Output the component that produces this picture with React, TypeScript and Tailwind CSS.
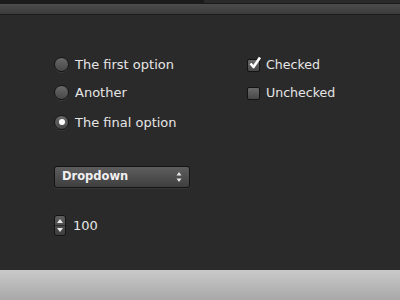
const font = "font-['Lucida_Grande','DejaVu_Sans',sans-serif]";

function Radio({ label, checked = false }: { label: string; checked?: boolean }) {
  return (
    <div className="flex h-[14px] items-center gap-[6px]">
      <span className="flex h-[15px] w-[15px] items-center justify-center rounded-full border border-[#141414] bg-[linear-gradient(#6a6a6a,#474747)] shadow-[0_1px_0_rgba(255,255,255,0.08)]">
        {checked && <span className="h-[6px] w-[6px] rounded-full bg-white" />}
      </span>
      <span className="text-[13px] leading-none text-[#e6e6e6]">{label}</span>
    </div>
  );
}

function Check({ label, checked = false }: { label: string; checked?: boolean }) {
  return (
    <div className="flex h-[13px] items-center gap-[6px]">
      <span className="relative h-[13px] w-[13px] rounded-[2px] border border-[#141414] bg-[linear-gradient(#6a6a6a,#474747)]">
        {checked && (
          <svg viewBox="0 0 14 14" className="absolute left-[0px] top-[-4px] h-[14px] w-[14px]">
            <path d="M2.5 7.5 L5.5 11 L12 1.5" fill="none" stroke="#fff" strokeWidth="2.6" strokeLinejoin="round" />
          </svg>
        )}
      </span>
      <span className="text-[12.6px] leading-none text-[#e6e6e6]">{label}</span>
    </div>
  );
}

function UpDown() {
  return (
    <svg viewBox="0 0 6 12" className="h-[12px] w-[6px]">
      <path d="M3 1 L5.5 4.5 H0.5 Z M3 11 L5.5 7.5 H0.5 Z" fill="#e8e8e8" />
    </svg>
  );
}

export default function App() {
  return (
    <div className={`flex h-[300px] w-[400px] flex-col bg-[#2b2a2b] ${font}`}>
      <div className="flex h-[4px]">
        <div className="w-[204px] bg-[#1b1b1b]" />
        <div className="flex-1 border-b border-[#1a1a1a] bg-[#2a2a2a]" />
      </div>
      <div className="h-[11px] border-b border-[#1c1c1c] bg-[linear-gradient(#4c4c4c,#3b3b3b)]" />

      <div className="flex flex-1 flex-col pl-[54px] pt-[42px]">
        <div className="flex">
          <div className="flex w-[193px] flex-col gap-[14px]">
            <Radio label="The first option" />
            <Radio label="Another" />
            <div className="mt-[2px]">
              <Radio label="The final option" checked />
            </div>
          </div>
          <div className="flex flex-col gap-[15px] pt-[2px]">
            <Check label="Checked" checked />
            <Check label="Unchecked" />
          </div>
        </div>

        <div className="mt-[37px] flex h-[22px] w-[136px] items-center justify-between rounded-[3px] border border-[#141414] bg-[linear-gradient(#5e5e5e,#3e3e3e)] pl-[7px] pr-[7px] shadow-[0_1px_0_rgba(255,255,255,0.06)]">
          <span className="text-[11.5px] font-bold leading-none text-[#f0f0f0]">Dropdown</span>
          <UpDown />
        </div>

        <div className="mt-[27px] flex items-center gap-[7px]">
          <span className="flex h-[21px] w-[12px] flex-col items-center justify-between rounded-[3px] border border-[#141414] bg-[linear-gradient(#5e5e5e,#3e3e3e)] py-[3px]">
            <svg viewBox="0 0 6 4" className="h-[4px] w-[6px]"><path d="M3 0 L6 4 H0 Z" fill="#e8e8e8" /></svg>
            <span className="h-px w-full bg-[#2a2a2a]" />
            <svg viewBox="0 0 6 4" className="h-[4px] w-[6px]"><path d="M3 4 L6 0 H0 Z" fill="#e8e8e8" /></svg>
          </span>
          <span className="text-[13px] leading-none text-[#e6e6e6]">100</span>
        </div>
      </div>

      <div className="h-[30px] bg-[linear-gradient(#c9c9c9,#a8a8a8)]" />
    </div>
  );
}
